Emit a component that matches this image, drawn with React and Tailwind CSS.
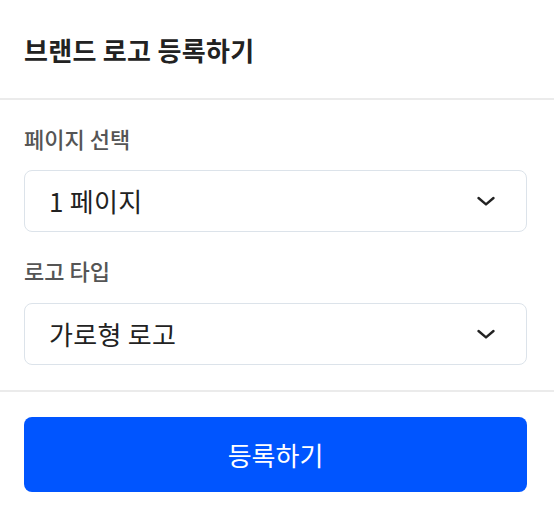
import React from 'react'

const Chevron = () => (
    <svg width="20" height="12" viewBox="0 0 20 12" fill="none" stroke="#222" strokeWidth="2.4" strokeLinecap="round" strokeLinejoin="round">
        <polyline points="2.5,3 10,9.4 17.5,3" />
    </svg>
)

const SelectBox = ({ value }) => (
    <button className="w-full h-[62px] flex items-center justify-between pl-6 pr-[30px] rounded-lg border border-[#dce3ea] bg-white text-left">
        <span className="text-[26px] text-[#222] leading-none tracking-[0.3px]">{value}</span>
        <Chevron />
    </button>
)

const App = () => {
    return (
        <div className="w-[554px] h-[518px] bg-white font-['Noto_Sans_CJK_KR','Noto_Sans',sans-serif]">
            {/* Header */}
            <div className="h-[100px] flex items-center pl-6 pr-[27px] border-b-2 border-[#ebebeb]">
                <h1 className="text-[26px] font-bold text-[#222] tracking-[0.3px]">브랜드 로고 등록하기</h1>
            </div>

            {/* Form */}
            <div className="pl-6 pr-[27px] pt-6 pb-[25px] border-b-2 border-[#ebebeb]">
                <label className="block text-[22px] font-medium text-[#555] leading-7 mb-[18px]">페이지 선택</label>
                <SelectBox value="1 페이지" />
                <label className="block text-[22px] font-medium text-[#555] leading-7 mt-6 mb-[19px]">로고 타입</label>
                <SelectBox value="가로형 로고" />
            </div>

            {/* Footer */}
            <div className="pl-6 pr-[27px] pt-[25px]">
                <button className="w-full h-[75px] rounded-lg bg-[#0055ff] text-white text-[26px]">
                    등록하기
                </button>
            </div>
        </div>
    )
}

export default App
